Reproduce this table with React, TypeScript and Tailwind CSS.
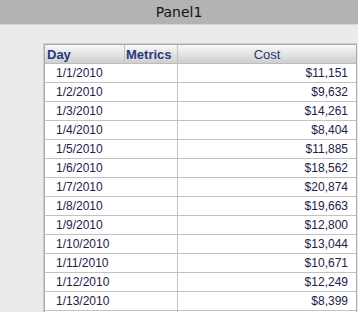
const ROWS = [
  { day: "1/1/2010", cost: "$11,151" },
  { day: "1/2/2010", cost: "$9,632" },
  { day: "1/3/2010", cost: "$14,261" },
  { day: "1/4/2010", cost: "$8,404" },
  { day: "1/5/2010", cost: "$11,885" },
  { day: "1/6/2010", cost: "$18,562" },
  { day: "1/7/2010", cost: "$20,874" },
  { day: "1/8/2010", cost: "$19,663" },
  { day: "1/9/2010", cost: "$12,800" },
  { day: "1/10/2010", cost: "$13,044" },
  { day: "1/11/2010", cost: "$10,671" },
  { day: "1/12/2010", cost: "$12,249" },
  { day: "1/13/2010", cost: "$8,399" },
  { day: "", cost: "" },
];

export default function App() {
  return (
    <div className="w-[358px] h-[312px] overflow-hidden bg-[#ebebeb] font-['Liberation_Sans',Arial,sans-serif]">
      {/* Panel title bar */}
      <div className="h-[25px] bg-[#b3b3b3] border-b border-[#d6d6d6] flex items-center justify-center font-['DejaVu_Sans',sans-serif] text-[14px] text-[#151515]">
        Panel1
      </div>

      {/* Grid */}
      <div className="pl-[43px] pt-[18px] pr-[1px]">
        <div className="border-l border-t border-[#cfcfcf]">
          <div className="border-l border-t border-r border-[#a9a9a9] bg-white">
            {/* Header */}
            <div className="flex h-[19px] border-b border-[#bdbdbd] bg-linear-to-b from-[#f8f8f8] to-[#cfcfcf] text-[13px] text-[#28397a]">
              <div className="w-[80px] border-r border-[#c4c4c4] pl-[2px] pt-px flex items-center font-bold">Day</div>
              <div className="w-[53px] border-r border-[#c4c4c4] pl-[1px] pt-px flex items-center font-bold">Metrics</div>
              <div className="flex-1 flex items-center justify-center pt-px">Cost</div>
            </div>

            {/* Body rows */}
            {ROWS.map((row, i) => (
              <div key={i} className="flex h-[19px] border-b border-[#c2c2c2] text-[12px] text-[#1c2148]">
                <div className="w-[133px] border-r border-[#c2c2c2] pl-[11px] flex items-center">{row.day}</div>
                <div className="flex-1 flex items-center justify-end pr-[8px]">{row.cost}</div>
              </div>
            ))}
          </div>
        </div>
      </div>
    </div>
  );
}
